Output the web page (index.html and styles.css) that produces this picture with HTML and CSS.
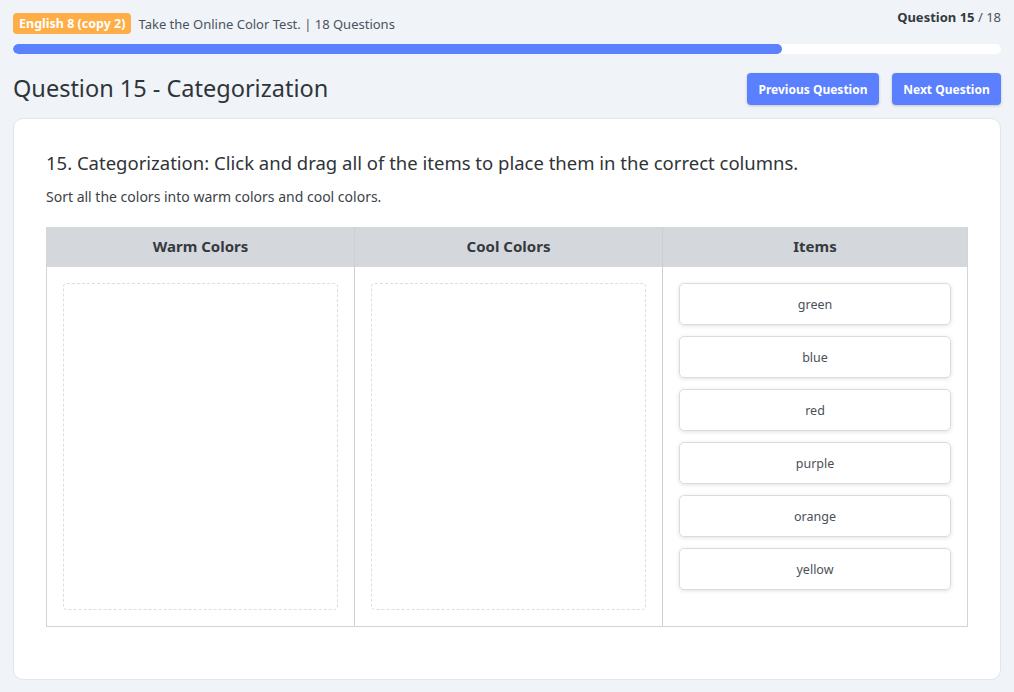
FILE: index.html
```html
<!DOCTYPE html>
<html>
<head>
<meta charset="utf-8">
<link rel="stylesheet" href="styles.css">
</head>
<body>
<div class="page">
  <div class="topbar">
    <div class="topleft">
      <span class="badge">English 8 (copy 2)</span>
      <span class="quizname">Take the Online Color Test. | 18 Questions</span>
    </div>
    <div class="counter"><b>Question 15</b> / 18</div>
  </div>
  <div class="progress"><div class="progress-fill" style="width:77.8%"></div></div>
  <div class="titlerow">
    <h1 class="title">Question 15 - Categorization</h1>
    <div class="nav">
      <button class="btn btn-prev">Previous Question</button>
      <button class="btn btn-next">Next Question</button>
    </div>
  </div>
  <div class="card">
    <h2 class="qtext">15. Categorization: Click and drag all of the items to place them in the correct columns.</h2>
    <p class="qsub">Sort all the colors into warm colors and cool colors.</p>
    <div class="table">
      <div class="col">
        <div class="colhead">Warm Colors</div>
        <div class="colbody"><div class="dropzone"></div></div>
      </div>
      <div class="col">
        <div class="colhead">Cool Colors</div>
        <div class="colbody"><div class="dropzone"></div></div>
      </div>
      <div class="col">
        <div class="colhead">Items</div>
        <div class="colbody items">
          <div class="item">green</div>
          <div class="item">blue</div>
          <div class="item">red</div>
          <div class="item">purple</div>
          <div class="item">orange</div>
          <div class="item">yellow</div>
        </div>
      </div>
    </div>
  </div>
</div>
</body>
</html>
```
FILE: styles.css
```css
* { box-sizing: border-box; }
html, body { margin: 0; padding: 0; }
body {
  background: #f0f4f8;
  font-family: "Noto Sans", "Open Sans", sans-serif;
  color: #343a40;
  width: 1014px;
  height: 692px;
  overflow: hidden;
}
.page { padding: 0 13px; }
.topbar {
  display: flex;
  justify-content: space-between;
  align-items: flex-start;
  height: 44px;
}
.topleft {
  display: flex;
  align-items: center;
  gap: 7px;
  margin-top: 13px;
}
.badge {
  background: #ffad46;
  color: #fff;
  font-weight: 700;
  font-size: 12.5px;
  line-height: 21px;
  height: 21px;
  padding: 0 6px;
  border-radius: 4px;
}
.quizname {
  font-size: 13px;
  color: #4a5260;
}
.counter {
  margin-top: 8px;
  font-size: 13px;
  color: #4a5260;
}
.counter b { color: #343a40; }
.progress {
  height: 10px;
  background: #fff;
  border-radius: 5px;
  overflow: hidden;
}
.progress-fill {
  height: 100%;
  background: #5a82ff;
  border-radius: 5px;
}
.titlerow {
  display: flex;
  justify-content: space-between;
  align-items: center;
  margin-top: 19px;
  height: 32px;
}
.title {
  margin: 0;
  font-size: 23.5px;
  font-weight: 400;
  color: #2f3438;
  position: relative;
  top: -1px;
}
.nav { display: flex; gap: 13px; }
.btn {
  font-family: inherit;
  background: #5b80ff;
  color: #fff;
  border: none;
  font-weight: 700;
  font-size: 12px;
  height: 32px;
  padding: 0;
  border-radius: 4px;
  box-shadow: 0 1px 3px rgba(0,0,0,0.2);
  text-align: center;
}
.btn-prev { width: 132px; }
.btn-next { width: 109px; }
.card {
  margin-top: 13px;
  background: #fff;
  border: 1px solid #e2e6ea;
  border-radius: 10px;
  height: 562px;
  padding: 31px 32px;
}
.qtext {
  margin: 0;
  font-size: 18.5px;
  font-weight: 400;
  color: #2f3438;
}
.qsub {
  margin: 12px 0 0;
  font-size: 14px;
  color: #3c4248;
}
.table {
  margin-top: 21px;
  display: grid;
  grid-template-columns: 307px 308px 1fr;
  border: 1px solid #d4d4d4;
  border-top: none;
  width: 922px;
}
.col + .col { border-left: 1px solid #cfcfcf; }
.colhead {
  background: #d4d7dc;
  height: 40px;
  line-height: 39px;
  text-align: center;
  font-weight: 700;
  font-size: 15px;
  color: #343a40;
}
.colbody {
  padding: 16px 16px 16px;
}
.dropzone {
  height: 327px;
  border: 1px dashed #dedede;
  border-radius: 4px;
}
.items {
  display: flex;
  flex-direction: column;
  gap: 11px;
}
.item {
  height: 42px;
  border: 1px solid #dcdcdc;
  border-radius: 5px;
  box-shadow: 0 1px 4px rgba(0,0,0,0.12);
  display: flex;
  align-items: center;
  justify-content: center;
  font-size: 12.5px;
  color: #4a5058;
}
```
